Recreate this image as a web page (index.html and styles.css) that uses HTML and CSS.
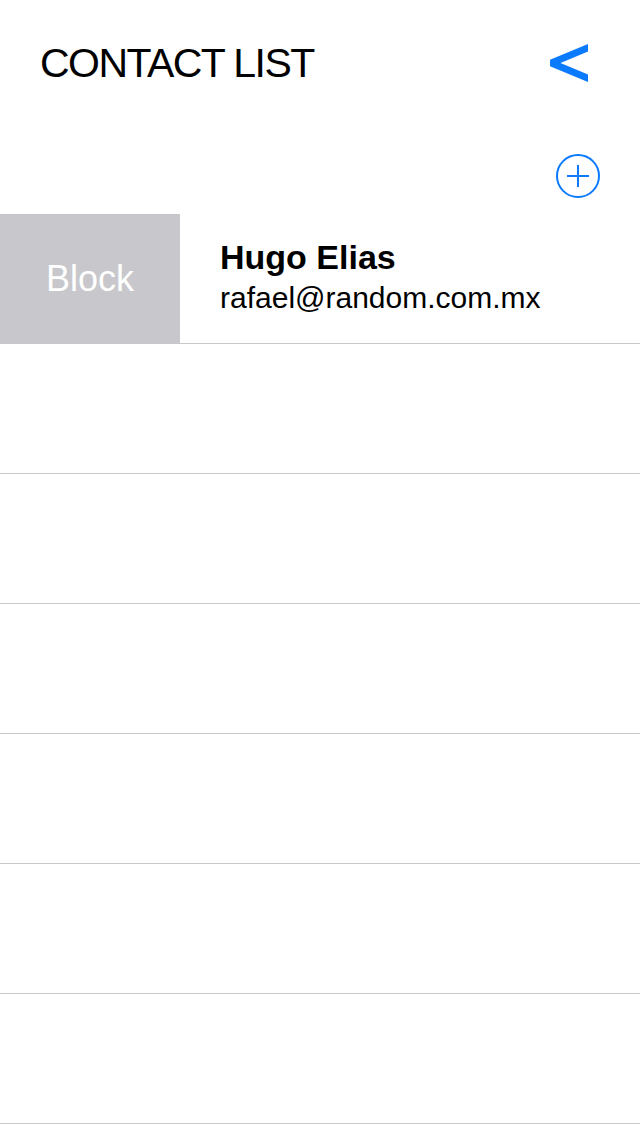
FILE: index.html
```html
<!DOCTYPE html>
<html lang="en">
<head>
<meta charset="utf-8">
<title>Contact List</title>
<link rel="stylesheet" href="styles.css">
</head>
<body>
<div class="screen">
  <header class="header">
    <h1 class="title">CONTACT LIST</h1>
    <button class="back" aria-label="Back">
      <svg width="38" height="38" viewBox="0 0 38 38">
        <polygon points="38,0 38,7.5 10.5,19 38,30.5 38,38 0,22.2 0,15.8" fill="#0a7aff"/>
      </svg>
    </button>
  </header>
  <div class="add-row">
    <button class="add" aria-label="Add contact">
      <svg width="44" height="44" viewBox="0 0 44 44">
        <circle cx="22" cy="22" r="21" fill="none" stroke="#0a7aff" stroke-width="2"/>
        <path d="M11 22 H33 M22 11 V33" stroke="#0a7aff" stroke-width="2"/>
      </svg>
    </button>
  </div>
  <ul class="list">
    <li class="row">
      <div class="block-action">Block</div>
      <div class="contact">
        <div class="name">Hugo Elias</div>
        <div class="email">rafael@random.com.mx</div>
      </div>
    </li>
    <li class="row"></li>
    <li class="row"></li>
    <li class="row"></li>
    <li class="row"></li>
    <li class="row"></li>
    <li class="row"></li>
  </ul>
</div>
</body>
</html>
```

FILE: styles.css
```css
* {
  box-sizing: border-box;
}

html, body {
  margin: 0;
  padding: 0;
  background: #ffffff;
}

body {
  font-family: "Liberation Sans", Arial, sans-serif;
  color: #000000;
}

.screen {
  width: 640px;
  height: 1136px;
  overflow: hidden;
  display: flex;
  flex-direction: column;
}

.header {
  height: 126px;
  display: flex;
  align-items: center;
  justify-content: space-between;
  padding: 0 52px 0 40px;
}

.title {
  margin: 0;
  font-size: 41px;
  font-weight: normal;
  letter-spacing: -1.55px;
  line-height: 1;
}

.back, .add {
  border: 0;
  background: none;
  padding: 0;
  margin: 0;
  display: flex;
  cursor: pointer;
}

.add-row {
  display: flex;
  justify-content: flex-end;
  padding: 28px 40px 16px 0;
}

.list {
  list-style: none;
  margin: 0;
  padding: 0;
}

.row {
  height: 130px;
  border-bottom: 1px solid #c8c7cc;
  display: flex;
}

.block-action {
  width: 180px;
  background: #c7c7cc;
  color: #ffffff;
  font-size: 36px;
  display: flex;
  align-items: center;
  justify-content: center;
}

.contact {
  flex: 1;
  padding-left: 40px;
  display: flex;
  flex-direction: column;
  justify-content: center;
}

.name {
  font-size: 34px;
  font-weight: bold;
  line-height: 38px;
}

.email {
  font-size: 30px;
  line-height: 44px;
}
```
